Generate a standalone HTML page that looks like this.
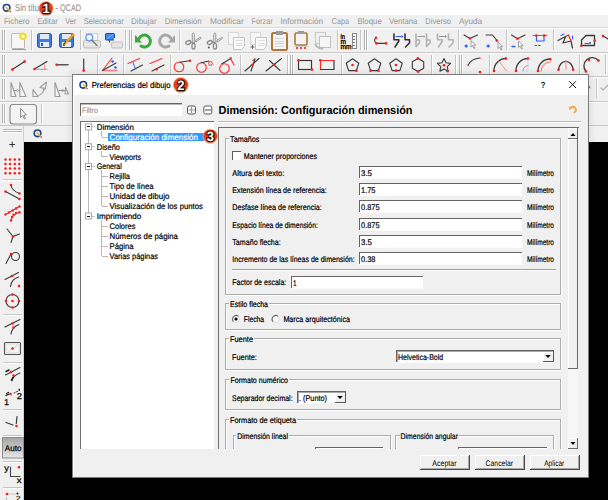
<!DOCTYPE html>
<html><head><meta charset="utf-8"><style>
html,body{margin:0;padding:0;background:#f0f0f0;}
svg{display:block;}
</style></head><body>
<svg width="608" height="500" viewBox="0 0 608 500" font-family="'Liberation Sans', sans-serif" shape-rendering="crispEdges" text-rendering="geometricPrecision">
<rect x="0" y="0" width="608" height="500" fill="#f0f0f0"/>
<rect x="0" y="0" width="608" height="15" fill="#ffffff"/>
<rect x="0" y="15" width="608" height="12" fill="#f0f0f0"/>
<rect x="0" y="27" width="608" height="1" fill="#d9d9d9"/>
<rect x="0" y="28" width="608" height="1" fill="#ffffff"/>
<text x="3.9" y="24" font-size="8.5" fill="#9a9a9a" textLength="25.6" lengthAdjust="spacingAndGlyphs" stroke="#9a9a9a" stroke-width="0.05">Fichero</text>
<text x="37.4" y="24" font-size="8.5" fill="#9a9a9a" textLength="20.5" lengthAdjust="spacingAndGlyphs" stroke="#9a9a9a" stroke-width="0.05">Editar</text>
<text x="65.3" y="24" font-size="8.5" fill="#9a9a9a" textLength="11.0" lengthAdjust="spacingAndGlyphs" stroke="#9a9a9a" stroke-width="0.05">Ver</text>
<text x="83.7" y="24" font-size="8.5" fill="#9a9a9a" textLength="40.0" lengthAdjust="spacingAndGlyphs" stroke="#9a9a9a" stroke-width="0.05">Seleccionar</text>
<text x="131" y="24" font-size="8.5" fill="#9a9a9a" textLength="25.6" lengthAdjust="spacingAndGlyphs" stroke="#9a9a9a" stroke-width="0.05">Dibujar</text>
<text x="164.7" y="24" font-size="8.5" fill="#9a9a9a" textLength="36.9" lengthAdjust="spacingAndGlyphs" stroke="#9a9a9a" stroke-width="0.05">Dimensión</text>
<text x="210" y="24" font-size="8.5" fill="#9a9a9a" textLength="33.7" lengthAdjust="spacingAndGlyphs" stroke="#9a9a9a" stroke-width="0.05">Modificar</text>
<text x="251.6" y="24" font-size="8.5" fill="#9a9a9a" textLength="21.0" lengthAdjust="spacingAndGlyphs" stroke="#9a9a9a" stroke-width="0.05">Forzar</text>
<text x="280.5" y="24" font-size="8.5" fill="#9a9a9a" textLength="42.5" lengthAdjust="spacingAndGlyphs" stroke="#9a9a9a" stroke-width="0.05">Información</text>
<text x="331.8" y="24" font-size="8.5" fill="#9a9a9a" textLength="17.2" lengthAdjust="spacingAndGlyphs" stroke="#9a9a9a" stroke-width="0.05">Capa</text>
<text x="357.4" y="24" font-size="8.5" fill="#9a9a9a" textLength="24.4" lengthAdjust="spacingAndGlyphs" stroke="#9a9a9a" stroke-width="0.05">Bloque</text>
<text x="389" y="24" font-size="8.5" fill="#9a9a9a" textLength="28.4" lengthAdjust="spacingAndGlyphs" stroke="#9a9a9a" stroke-width="0.05">Ventana</text>
<text x="425.3" y="24" font-size="8.5" fill="#9a9a9a" textLength="25.7" lengthAdjust="spacingAndGlyphs" stroke="#9a9a9a" stroke-width="0.05">Diverso</text>
<text x="459" y="24" font-size="8.5" fill="#9a9a9a" textLength="23.0" lengthAdjust="spacingAndGlyphs" stroke="#9a9a9a" stroke-width="0.05">Ayuda</text>
<text x="15" y="11" font-size="9.5" fill="#8f8f8f" textLength="24.0" lengthAdjust="spacingAndGlyphs" stroke="#8f8f8f" stroke-width="0.1">Sin títu</text>
<text x="55.5" y="11" font-size="9.5" fill="#8f8f8f" textLength="25.5" lengthAdjust="spacingAndGlyphs" stroke="#8f8f8f" stroke-width="0.1">- QCAD</text>
<rect x="0" y="52" width="608" height="1" fill="#c9c9c9"/>
<rect x="0" y="53" width="608" height="1" fill="#fafafa"/>
<rect x="0" y="76" width="608" height="1" fill="#c9c9c9"/>
<rect x="0" y="77" width="608" height="1" fill="#fafafa"/>
<rect x="0" y="101" width="608" height="1" fill="#c9c9c9"/>
<rect x="0" y="102" width="608" height="1" fill="#fafafa"/>
<rect x="0" y="125" width="608" height="1" fill="#c9c9c9"/>
<rect x="0" y="126" width="608" height="1" fill="#fafafa"/>
<rect x="0" y="126" width="23" height="374" fill="#f0f0f0"/>
<rect x="23" y="126" width="1" height="374" fill="#d0d0d0"/>
<rect x="24" y="126" width="584" height="16" fill="#f0f0f0"/>
<rect x="24" y="142" width="584" height="358" fill="#000000"/>
<circle cx="6.6" cy="7.8" r="3.3" stroke="#1f3f8f" stroke-width="1.6" fill="none" shape-rendering="auto"/>
<path d="M6.1 7.3L10.1 11.3" stroke="#f0b020" stroke-width="1.6" fill="none" shape-rendering="auto" stroke-linecap="round" stroke-linejoin="round"/>
<circle cx="10.399999999999999" cy="11.6" r="0.8" fill="#e05020" shape-rendering="auto"/>
<rect x="2" y="30" width="1" height="20" fill="#b4b4b4"/>
<rect x="3" y="30" width="1" height="20" fill="#fdfdfd"/>
<rect x="4" y="30" width="1" height="20" fill="#b4b4b4"/>
<rect x="5" y="30" width="1" height="20" fill="#fdfdfd"/>
<rect x="11" y="33" width="14" height="16" fill="#f7f7f7"/>
<rect x="11.5" y="33.5" width="13" height="15" fill="none" stroke="#b8b8b8" rx="1" shape-rendering="auto"/>
<rect x="12" y="49" width="14" height="1" fill="#9a9a9a"/>
<circle cx="23" cy="36.2" r="2.6" stroke="#f2dc30" stroke-width="2.2" fill="#fffbe0" shape-rendering="auto"/>
<rect x="31" y="30" width="1" height="20" fill="#c4c4c4"/>
<rect x="32" y="30" width="1" height="20" fill="#ffffff"/>
<rect x="37.5" y="33.5" width="14" height="14" rx="2" fill="#3b7ee6" stroke="#2058b8" shape-rendering="auto"/>
<rect x="40" y="34" width="9" height="5" fill="#dfe9f8"/>
<rect x="40" y="42" width="9" height="5" fill="#e8eef8"/>
<rect x="41" y="43" width="2" height="3" fill="#2a5fd0"/>
<rect x="59.5" y="33.5" width="14" height="14" rx="2" fill="#3b7ee6" stroke="#2058b8" shape-rendering="auto"/>
<rect x="62" y="34" width="9" height="5" fill="#dfe9f8"/>
<rect x="62" y="42" width="9" height="5" fill="#e8eef8"/>
<rect x="63" y="43" width="2" height="3" fill="#2a5fd0"/>
<path d="M64.5 44L73.5 34.5" stroke="#e8a020" stroke-width="2.4" fill="none" shape-rendering="auto" stroke-linecap="round" stroke-linejoin="round"/>
<path d="M64 44.5l1.5-3" stroke="#704010" stroke-width="1" fill="none" shape-rendering="auto" stroke-linecap="round" stroke-linejoin="round"/>
<rect x="80" y="30" width="1" height="20" fill="#c4c4c4"/>
<rect x="81" y="30" width="1" height="20" fill="#ffffff"/>
<rect x="86" y="33" width="12" height="8" fill="#f6f6f6"/>
<rect x="86.5" y="33.5" width="11" height="7" fill="none" stroke="#d0d0d0" shape-rendering="auto"/>
<rect x="83.5" y="40.5" width="17" height="7.5" rx="2" fill="#e4e4e4" stroke="#bcbcbc" shape-rendering="auto"/>
<rect x="85" y="44" width="14" height="1" fill="#f4f4f4"/>
<circle cx="89.3" cy="37.6" r="3.4" stroke="#6a98e6" stroke-width="1.3" fill="#eef4ff" shape-rendering="auto"/>
<path d="M91.8 40.2L97 45.5" stroke="#7a7a7a" stroke-width="1.6" fill="none" shape-rendering="auto" stroke-linecap="round" stroke-linejoin="round"/>
<rect x="105.5" y="33.5" width="9" height="6.5" rx="0.8" fill="#3d8af2" stroke="#1e44a8" shape-rendering="auto"/>
<path d="M107 38.5l6-4" stroke="#8fc0ff" stroke-width="0.8" fill="none" shape-rendering="auto" stroke-linecap="round" stroke-linejoin="round"/>
<path d="M109.5 40.5v1.5" stroke="#6a4020" stroke-width="1.2" fill="none" shape-rendering="auto" stroke-linecap="round" stroke-linejoin="round"/>
<rect x="114" y="38" width="6" height="5" fill="#f4f4f4"/>
<rect x="111.5" y="42" width="11" height="6" rx="1.5" fill="#e6e6e6" stroke="#bdbdbd" shape-rendering="auto"/>
<rect x="125" y="30" width="1" height="20" fill="#c4c4c4"/>
<rect x="126" y="30" width="1" height="20" fill="#ffffff"/>
<rect x="129" y="30" width="1" height="20" fill="#b4b4b4"/>
<rect x="130" y="30" width="1" height="20" fill="#fdfdfd"/>
<rect x="131" y="30" width="1" height="20" fill="#b4b4b4"/>
<rect x="132" y="30" width="1" height="20" fill="#fdfdfd"/>
<path d="M139 38.5 A6 6 0 1 1 141 46" stroke="#3aa83a" stroke-width="3" fill="none" shape-rendering="auto" stroke-linecap="round" stroke-linejoin="round"/>
<path d="M135 35l0 7.5h7z" fill="#3aa83a" shape-rendering="auto"/>
<path d="M171 38.5 A6 6 0 1 0 169 46" stroke="#a8a8a8" stroke-width="3" fill="none" shape-rendering="auto" stroke-linecap="round" stroke-linejoin="round"/>
<path d="M175 35l0 7.5h-7z" fill="#a8a8a8" shape-rendering="auto"/>
<rect x="179" y="30" width="1" height="20" fill="#c4c4c4"/>
<rect x="180" y="30" width="1" height="20" fill="#ffffff"/>
<path d="M193.3 33q1 0 1 1.5v8.5h-2v-8.5q0-1.5 1-1.5z" fill="#f4f4f4" stroke="#8a8a8a" stroke-width="0.9" shape-rendering="auto"/>
<path d="M195.3 40.5l5-3.2q1 0 0.5 1.2l-5 3.5z" fill="#f4f4f4" stroke="#8a8a8a" stroke-width="0.9" shape-rendering="auto"/>
<ellipse cx="188.3" cy="42.5" rx="2.6" ry="1.7" transform="rotate(-25 188.3 42.5)" fill="none" stroke="#8a8a8a" stroke-width="1.3" shape-rendering="auto"/>
<ellipse cx="193.5" cy="46.3" rx="1.6" ry="2.9" fill="none" stroke="#8a8a8a" stroke-width="1.3" shape-rendering="auto"/>
<path d="M190.3 42L192.8 42.5" stroke="#8a8a8a" stroke-width="1.1" fill="none" shape-rendering="auto" stroke-linecap="round" stroke-linejoin="round"/>
<path d="M214.8 33q1 0 1 1.5v8.5h-2v-8.5q0-1.5 1-1.5z" fill="#f4f4f4" stroke="#8a8a8a" stroke-width="0.9" shape-rendering="auto"/>
<path d="M216.8 40.5l5-3.2q1 0 0.5 1.2l-5 3.5z" fill="#f4f4f4" stroke="#8a8a8a" stroke-width="0.9" shape-rendering="auto"/>
<ellipse cx="209.8" cy="42.5" rx="2.6" ry="1.7" transform="rotate(-25 209.8 42.5)" fill="none" stroke="#8a8a8a" stroke-width="1.3" shape-rendering="auto"/>
<ellipse cx="215.0" cy="46.3" rx="1.6" ry="2.9" fill="none" stroke="#8a8a8a" stroke-width="1.3" shape-rendering="auto"/>
<path d="M211.8 42L214.3 42.5" stroke="#8a8a8a" stroke-width="1.1" fill="none" shape-rendering="auto" stroke-linecap="round" stroke-linejoin="round"/>
<circle cx="208.8" cy="47.5" r="1" fill="#555" shape-rendering="auto"/>
<rect x="228.5" y="32.5" width="10" height="12" fill="#f6f6f6" stroke="#d8d8d8" shape-rendering="auto"/>
<path d="M233.5 37.5h11v9l-3 3h-8z" fill="#fafafa" stroke="#c4c4c4" shape-rendering="auto"/>
<rect x="236" y="40.0" width="7" height="1" fill="#dedede"/>
<rect x="236" y="42.5" width="7" height="1" fill="#dedede"/>
<rect x="236" y="45.0" width="7" height="1" fill="#dedede"/>
<rect x="250.5" y="32.5" width="10" height="12" fill="#f6f6f6" stroke="#d8d8d8" shape-rendering="auto"/>
<path d="M255.5 37.5h11v9l-3 3h-8z" fill="#fafafa" stroke="#c4c4c4" shape-rendering="auto"/>
<rect x="258" y="40.0" width="7" height="1" fill="#dedede"/>
<rect x="258" y="42.5" width="7" height="1" fill="#dedede"/>
<rect x="258" y="45.0" width="7" height="1" fill="#dedede"/>
<path d="M251 47h3M252.5 45.5v3" stroke="#555" stroke-width="0.9" fill="none" shape-rendering="auto" stroke-linecap="round" stroke-linejoin="round"/>
<rect x="272" y="33" width="15" height="17" rx="1.5" fill="#f4f4f4" stroke="#b07838" stroke-width="2" shape-rendering="auto"/>
<rect x="276" y="31" width="7" height="4" fill="#9a9a9a"/>
<rect x="275" y="38.0" width="9" height="1" fill="#d6d6d6"/>
<rect x="275" y="40.5" width="9" height="1" fill="#d6d6d6"/>
<rect x="275" y="43.0" width="9" height="1" fill="#d6d6d6"/>
<rect x="275" y="45.5" width="9" height="1" fill="#d6d6d6"/>
<rect x="295" y="33" width="12" height="12" rx="1.5" fill="#f4f4f4" stroke="#b07838" stroke-width="1.6" shape-rendering="auto"/>
<rect x="298" y="31" width="6" height="3" fill="#9a9a9a"/>
<circle cx="297" cy="48" r="1.1" fill="#ff1a1a" shape-rendering="auto"/>
<circle cx="301" cy="48" r="1.1" fill="#ff1a1a" shape-rendering="auto"/>
<circle cx="305" cy="48" r="1.1" fill="#ff1a1a" shape-rendering="auto"/>
<rect x="294" y="46" width="15" height="1" fill="#d0d0d0"/>
<rect x="315.5" y="32.5" width="10" height="11" fill="#f0f0f0" stroke="#cacaca" shape-rendering="auto"/>
<rect x="319.5" y="36.5" width="11" height="11" fill="#f6f6f6" stroke="#c0c0c0" shape-rendering="auto"/>
<path d="M315.5 44.5q2 4 7 4" stroke="#b8b8b8" stroke-width="1.8" fill="none" shape-rendering="auto" stroke-linecap="round" stroke-linejoin="round"/>
<rect x="337" y="30" width="1" height="20" fill="#c4c4c4"/>
<rect x="338" y="30" width="1" height="20" fill="#ffffff"/>
<text x="340.5" y="38.5" font-size="7" fill="#000" textLength="4.5" lengthAdjust="spacingAndGlyphs" stroke="#000" stroke-width="0.35">in</text>
<text x="340.5" y="43.8" font-size="7" fill="#000" textLength="5.5" lengthAdjust="spacingAndGlyphs" stroke="#000" stroke-width="0.35">m</text>
<text x="340.5" y="49" font-size="7" fill="#000" textLength="11.0" lengthAdjust="spacingAndGlyphs" stroke="#000" stroke-width="0.35">mm</text>
<rect x="352.5" y="33.5" width="4" height="15" fill="#f8f8f8" stroke="#888" shape-rendering="auto"/>
<rect x="353" y="36" width="2" height="1" fill="#777"/>
<rect x="353" y="39" width="2" height="1" fill="#777"/>
<rect x="353" y="42" width="2" height="1" fill="#777"/>
<rect x="353" y="45" width="2" height="1" fill="#777"/>
<rect x="360" y="30" width="1" height="20" fill="#c4c4c4"/>
<rect x="361" y="30" width="1" height="20" fill="#ffffff"/>
<rect x="364" y="30" width="1" height="20" fill="#b4b4b4"/>
<rect x="365" y="30" width="1" height="20" fill="#fdfdfd"/>
<rect x="366" y="30" width="1" height="20" fill="#b4b4b4"/>
<rect x="367" y="30" width="1" height="20" fill="#fdfdfd"/>
<path d="M376 37.8 Q373 40.5 376.4 43.4 L386 43.4" stroke="#3a3a3a" stroke-width="1.1" fill="none" shape-rendering="auto" stroke-linecap="round" stroke-linejoin="round"/>
<circle cx="376" cy="37.8" r="1.3" fill="#ff1a1a" shape-rendering="auto"/>
<circle cx="376.4" cy="43.4" r="1.3" fill="#ff1a1a" shape-rendering="auto"/>
<circle cx="386" cy="43.4" r="1.3" fill="#ff1a1a" shape-rendering="auto"/>
<path d="M394 34V39.8H398.8V41L395 47" stroke="#333" stroke-width="1.6" fill="none" shape-rendering="auto" stroke-linecap="round" stroke-linejoin="round"/>
<path d="M405 34V39.8H409.5V43L405.5 47" stroke="#333" stroke-width="1.6" fill="none" shape-rendering="auto" stroke-linecap="round" stroke-linejoin="round"/>
<path d="M396 36.5h5" stroke="#3355ee" stroke-width="1" fill="none" shape-rendering="auto" stroke-linecap="round" stroke-linejoin="round"/>
<path d="M401.5 35l2 1.5l-2 1.5z" fill="#3355ee" shape-rendering="auto"/>
<path d="M416 34V46.5L419.5 43V40H416" stroke="#b0b0b0" stroke-width="1.5" fill="none" shape-rendering="auto" stroke-linecap="round" stroke-linejoin="round"/>
<path d="M426.5 34V46.5L430.0 43V40H426.5" stroke="#b0b0b0" stroke-width="1.5" fill="none" shape-rendering="auto" stroke-linecap="round" stroke-linejoin="round"/>
<path d="M418 36.5h5" stroke="#909090" stroke-width="0.9" fill="none" shape-rendering="auto" stroke-linecap="round" stroke-linejoin="round"/>
<path d="M423.5 35.2l1.6 1.3l-1.6 1.3z" fill="#909090" shape-rendering="auto"/>
<path d="M437.5 34V39.8H442.3V41L438.5 47" stroke="#b4b4b4" stroke-width="1.6" fill="none" shape-rendering="auto" stroke-linecap="round" stroke-linejoin="round"/>
<path d="M448.5 34V39.8H453.0V43L449.0 47" stroke="#b4b4b4" stroke-width="1.6" fill="none" shape-rendering="auto" stroke-linecap="round" stroke-linejoin="round"/>
<path d="M439.5 36.5h5" stroke="#909090" stroke-width="1" fill="none" shape-rendering="auto" stroke-linecap="round" stroke-linejoin="round"/>
<path d="M445.0 35l2 1.5l-2 1.5z" fill="#909090" shape-rendering="auto"/>
<rect x="458" y="30" width="1" height="20" fill="#c4c4c4"/>
<rect x="459" y="30" width="1" height="20" fill="#ffffff"/>
<path d="M464 35L470 38.5L477.5 35" stroke="#3a3a3a" stroke-width="1.1" fill="none" shape-rendering="auto" stroke-linecap="round" stroke-linejoin="round"/>
<circle cx="470" cy="38.5" r="1.3" fill="#ff1a1a" shape-rendering="auto"/>
<path d="M465 46h2.4M466.2 44.8v2.4" stroke="#2f5fff" stroke-width="1.3" fill="none" shape-rendering="auto" stroke-linecap="round" stroke-linejoin="round"/>
<path d="M471 40.5v6.5l1.5-1.5l1.5 3l1-0.5l-1.5-3h2.2z" fill="#f8f8f8" stroke="#909090" stroke-width="0.8" shape-rendering="auto"/>
<path d="M486 35H492.5L497 40.5" stroke="#3a3a3a" stroke-width="1.1" fill="none" shape-rendering="auto" stroke-linecap="round" stroke-linejoin="round"/>
<circle cx="496.8" cy="40.6" r="1.3" fill="#ff1a1a" shape-rendering="auto"/>
<path d="M487 46h2.4M488.2 44.8v2.4" stroke="#2f5fff" stroke-width="1.3" fill="none" shape-rendering="auto" stroke-linecap="round" stroke-linejoin="round"/>
<path d="M498 42v6.5l1.5-1.5l1.5 3l1-0.5l-1.5-3h2.2z" fill="#f8f8f8" stroke="#909090" stroke-width="0.8" shape-rendering="auto"/>
<rect x="506" y="30" width="1" height="20" fill="#c4c4c4"/>
<rect x="507" y="30" width="1" height="20" fill="#ffffff"/>
<path d="M511.5 35L517.5 38.7L525 35" stroke="#3a3a3a" stroke-width="1.1" fill="none" shape-rendering="auto" stroke-linecap="round" stroke-linejoin="round"/>
<circle cx="517.5" cy="38.7" r="1.3" fill="#ff1a1a" shape-rendering="auto"/>
<path d="M512 46.5h3" stroke="#2f5fff" stroke-width="1.3" fill="none" shape-rendering="auto" stroke-linecap="round" stroke-linejoin="round"/>
<path d="M518.5 41v6.5l1.5-1.5l1.5 3l1-0.5l-1.5-3h2.2z" fill="#f8f8f8" stroke="#909090" stroke-width="0.8" shape-rendering="auto"/>
<path d="M533 35.5h14" stroke="#777" stroke-width="1" fill="none" shape-rendering="auto" stroke-linecap="round" stroke-linejoin="round"/>
<path d="M536.5 35.5v5.5h7.5v-5.5" stroke="#2f5fff" stroke-width="1.2" fill="none" shape-rendering="auto" stroke-linecap="round" stroke-linejoin="round"/>
<circle cx="536.3" cy="35.5" r="1.3" fill="#ff1a1a" shape-rendering="auto"/>
<circle cx="544.2" cy="35.5" r="1.3" fill="#ff1a1a" shape-rendering="auto"/>
<path d="M535 45.5h1.8M538.5 45.5h1.8" stroke="#2f5fff" stroke-width="1.1" fill="none" shape-rendering="auto" stroke-linecap="round" stroke-linejoin="round"/>
<rect x="553" y="30" width="1" height="20" fill="#c4c4c4"/>
<rect x="554" y="30" width="1" height="20" fill="#ffffff"/>
<path d="M558 40.5L565.5 36.5M563 43L571 41L572.5 48M563 43L565.5 37" stroke="#3a3a3a" stroke-width="1.2" fill="none" shape-rendering="auto" stroke-linecap="round" stroke-linejoin="round"/>
<path d="M565.5 36.5L568.5 35L571 41" stroke="#e02020" stroke-width="1.1" fill="none" shape-rendering="auto" stroke-linecap="round" stroke-linejoin="round"/>
<path d="M561 35.5l3-1.5" stroke="#2f5fff" stroke-width="1.1" fill="none" shape-rendering="auto" stroke-linecap="round" stroke-linejoin="round"/>
<path d="M572.5 39v-3" stroke="#2f5fff" stroke-width="1.1" fill="none" shape-rendering="auto" stroke-linecap="round" stroke-linejoin="round"/>
<path d="M581.5 40L586 35.5H594.5V45.5H581.5Z" stroke="#3a3a3a" stroke-width="1.3" fill="none" shape-rendering="auto" stroke-linecap="round" stroke-linejoin="round"/>
<circle cx="581.3" cy="45.8" r="1.3" fill="#ff1a1a" shape-rendering="auto"/>
<circle cx="594.7" cy="40.7" r="1.3" fill="#ff1a1a" shape-rendering="auto"/>
<path d="M585 43.5h4" stroke="#2f5fff" stroke-width="1" fill="none" shape-rendering="auto" stroke-linecap="round" stroke-linejoin="round"/>
<circle cx="590" cy="43" r="1" fill="#2f5fff" shape-rendering="auto"/>
<path d="M603 36L608 39" stroke="#3a3a3a" stroke-width="1.1" fill="none" shape-rendering="auto" stroke-linecap="round" stroke-linejoin="round"/>
<circle cx="603" cy="36" r="1.3" fill="#ff1a1a" shape-rendering="auto"/>
<rect x="2" y="55" width="1" height="19" fill="#b4b4b4"/>
<rect x="3" y="55" width="1" height="19" fill="#fdfdfd"/>
<rect x="4" y="55" width="1" height="19" fill="#b4b4b4"/>
<rect x="5" y="55" width="1" height="19" fill="#fdfdfd"/>
<path d="M12.3 69.6L24.6 61.4" stroke="#3a3a3a" stroke-width="1.2" fill="none" shape-rendering="auto" stroke-linecap="round" stroke-linejoin="round"/>
<circle cx="12.3" cy="69.6" r="1.3" fill="#ff1a1a" shape-rendering="auto"/>
<circle cx="24.6" cy="61.4" r="1.3" fill="#ff1a1a" shape-rendering="auto"/>
<path d="M36 69.3H47" stroke="#8fb0ff" stroke-width="1.3" fill="none" shape-rendering="auto" stroke-linecap="round" stroke-linejoin="round"/>
<path d="M34.5 69L47 61.5" stroke="#3a3a3a" stroke-width="1.2" fill="none" shape-rendering="auto" stroke-linecap="round" stroke-linejoin="round"/>
<path d="M44 64.5q1.5 2 0.7 4.5" stroke="#ff6060" stroke-width="0.9" fill="none" shape-rendering="auto" stroke-linecap="round" stroke-linejoin="round"/>
<circle cx="34.5" cy="69" r="1.3" fill="#ff1a1a" shape-rendering="auto"/>
<path d="M57 64.8H68" stroke="#555" stroke-width="1.6" fill="none" shape-rendering="auto" stroke-linecap="round" stroke-linejoin="round"/>
<circle cx="56.6" cy="64.8" r="1.3" fill="#ff1a1a" shape-rendering="auto"/>
<path d="M83.7 59V70" stroke="#3a3a3a" stroke-width="1.2" fill="none" shape-rendering="auto" stroke-linecap="round" stroke-linejoin="round"/>
<circle cx="83.7" cy="70.6" r="1.3" fill="#ff1a1a" shape-rendering="auto"/>
<rect x="97" y="55" width="1" height="19" fill="#c4c4c4"/>
<rect x="98" y="55" width="1" height="19" fill="#ffffff"/>
<path d="M102.5 70.5H117" stroke="#ff8080" stroke-width="1.3" fill="none" shape-rendering="auto" stroke-linecap="round" stroke-linejoin="round"/>
<path d="M102.5 70.5L112 58" stroke="#ff3030" stroke-width="1.1" fill="none" shape-rendering="auto" stroke-linecap="round" stroke-linejoin="round"/>
<path d="M102.5 70.5L116 63" stroke="#3a3a3a" stroke-width="1.1" fill="none" shape-rendering="auto" stroke-linecap="round" stroke-linejoin="round"/>
<circle cx="112.5" cy="61.5" r="1.3" fill="#2f5fff" shape-rendering="auto"/>
<circle cx="115.5" cy="67.5" r="1.3" fill="#2f5fff" shape-rendering="auto"/>
<rect x="123" y="55" width="1" height="19" fill="#c4c4c4"/>
<rect x="124" y="55" width="1" height="19" fill="#ffffff"/>
<path d="M128 63.5L139.5 58.5" stroke="#ff3030" stroke-width="1.1" fill="none" shape-rendering="auto" stroke-linecap="round" stroke-linejoin="round"/>
<path d="M131 71L142.5 65" stroke="#3a3a3a" stroke-width="1.1" fill="none" shape-rendering="auto" stroke-linecap="round" stroke-linejoin="round"/>
<path d="M133 62.5L135.5 69" stroke="#2f5fff" stroke-width="1" fill="none" shape-rendering="auto" stroke-linecap="round" stroke-linejoin="round"/>
<path d="M150 63.5L162 58.5" stroke="#ff3030" stroke-width="1.1" fill="none" shape-rendering="auto" stroke-linecap="round" stroke-linejoin="round"/>
<path d="M152 71L164 65" stroke="#3a3a3a" stroke-width="1.1" fill="none" shape-rendering="auto" stroke-linecap="round" stroke-linejoin="round"/>
<circle cx="156.5" cy="69.2" r="1.3" fill="#ff1a1a" shape-rendering="auto"/>
<rect x="170" y="55" width="1" height="19" fill="#c4c4c4"/>
<rect x="171" y="55" width="1" height="19" fill="#ffffff"/>
<circle cx="179" cy="67" r="4.8" stroke="#ff2a2a" stroke-width="1.1" fill="none" shape-rendering="auto"/>
<path d="M179.5 62.2L189.5 60.7" stroke="#3a3a3a" stroke-width="1.1" fill="none" shape-rendering="auto" stroke-linecap="round" stroke-linejoin="round"/>
<circle cx="190" cy="60.7" r="1.3" fill="#ff1a1a" shape-rendering="auto"/>
<circle cx="201.5" cy="67.5" r="4.8" stroke="#ff2a2a" stroke-width="1.1" fill="none" shape-rendering="auto"/>
<circle cx="210.5" cy="63.5" r="1.9" stroke="#ff2a2a" stroke-width="1" fill="none" shape-rendering="auto"/>
<path d="M201 62.7L209 61" stroke="#3a3a3a" stroke-width="1.1" fill="none" shape-rendering="auto" stroke-linecap="round" stroke-linejoin="round"/>
<circle cx="224.5" cy="68.5" r="4.8" stroke="#ff2a2a" stroke-width="1.1" fill="none" shape-rendering="auto"/>
<path d="M222 63.8L231.5 58" stroke="#3a3a3a" stroke-width="1.1" fill="none" shape-rendering="auto" stroke-linecap="round" stroke-linejoin="round"/>
<path d="M230 57.5L234 65" stroke="#ff2a2a" stroke-width="1.1" fill="none" shape-rendering="auto" stroke-linecap="round" stroke-linejoin="round"/>
<rect x="240" y="55" width="1" height="19" fill="#c4c4c4"/>
<rect x="241" y="55" width="1" height="19" fill="#ffffff"/>
<path d="M245 71L259 58.5M251 71L255 59" stroke="#3a3a3a" stroke-width="1.1" fill="none" shape-rendering="auto" stroke-linecap="round" stroke-linejoin="round"/>
<path d="M253 60.5L255 59" stroke="#ff3030" stroke-width="1.2" fill="none" shape-rendering="auto" stroke-linecap="round" stroke-linejoin="round"/>
<circle cx="252.2" cy="65" r="1.3" fill="#ff1a1a" shape-rendering="auto"/>
<path d="M266 71L281.5 58.5M269.5 60.5L280 70.5" stroke="#3a3a3a" stroke-width="1.1" fill="none" shape-rendering="auto" stroke-linecap="round" stroke-linejoin="round"/>
<circle cx="274.2" cy="64.9" r="1.3" fill="#ff1a1a" shape-rendering="auto"/>
<rect x="287" y="55" width="1" height="19" fill="#c4c4c4"/>
<rect x="288" y="55" width="1" height="19" fill="#ffffff"/>
<rect x="290" y="55" width="1" height="19" fill="#b4b4b4"/>
<rect x="291" y="55" width="1" height="19" fill="#fdfdfd"/>
<rect x="292" y="55" width="1" height="19" fill="#b4b4b4"/>
<rect x="293" y="55" width="1" height="19" fill="#fdfdfd"/>
<rect x="298.5" y="60.5" width="13" height="9" fill="none" stroke="#3a3a3a" stroke-width="1.2" shape-rendering="auto"/>
<circle cx="298.5" cy="60.2" r="1.3" fill="#ff1a1a" shape-rendering="auto"/>
<circle cx="312" cy="69.6" r="1.3" fill="#ff1a1a" shape-rendering="auto"/>
<path d="M320.5 69.5V60.5H334" stroke="#ff2a2a" stroke-width="1.2" fill="none" shape-rendering="auto" stroke-linecap="round" stroke-linejoin="round"/>
<path d="M334 60.5V69.5H320.5" stroke="#3a3a3a" stroke-width="1.2" fill="none" shape-rendering="auto" stroke-linecap="round" stroke-linejoin="round"/>
<circle cx="320.3" cy="60.2" r="1.3" fill="#ff1a1a" shape-rendering="auto"/>
<rect x="341" y="55" width="1" height="19" fill="#c4c4c4"/>
<rect x="342" y="55" width="1" height="19" fill="#ffffff"/>
<path d="M352.50 58.70L358.78 63.26L356.38 70.64L348.62 70.64L346.22 63.26Z" stroke="#3a3a3a" stroke-width="1.1" fill="none" shape-rendering="auto" stroke-linecap="round" stroke-linejoin="round"/>
<circle cx="352.5" cy="65" r="1.3" fill="#ff1a1a" shape-rendering="auto"/>
<circle cx="356.3793826651303" cy="70.63951216287465" r="1.3" fill="#ff1a1a" shape-rendering="auto"/>
<path d="M374.50 58.70L380.78 63.26L378.38 70.64L370.62 70.64L368.22 63.26Z" stroke="#3a3a3a" stroke-width="1.1" fill="none" shape-rendering="auto" stroke-linecap="round" stroke-linejoin="round"/>
<circle cx="378.3793826651303" cy="70.63951216287465" r="1.3" fill="#ff1a1a" shape-rendering="auto"/>
<circle cx="370.6206173348697" cy="70.63951216287465" r="1.3" fill="#ff1a1a" shape-rendering="auto"/>
<path d="M396.00 58.70L402.28 63.26L399.88 70.64L392.12 70.64L389.72 63.26Z" stroke="#3a3a3a" stroke-width="1.1" fill="none" shape-rendering="auto" stroke-linecap="round" stroke-linejoin="round"/>
<circle cx="396" cy="65" r="1.3" fill="#ff1a1a" shape-rendering="auto"/>
<circle cx="396" cy="70.6" r="1.3" fill="#ff1a1a" shape-rendering="auto"/>
<path d="M418.00 58.40L423.72 61.70L423.72 68.30L418.00 71.60L412.28 68.30L412.28 61.70Z" stroke="#3a3a3a" stroke-width="1.1" fill="none" shape-rendering="auto" stroke-linecap="round" stroke-linejoin="round"/>
<circle cx="418" cy="58.4" r="1.3" fill="#ff1a1a" shape-rendering="auto"/>
<circle cx="418" cy="71.6" r="1.3" fill="#ff1a1a" shape-rendering="auto"/>
<rect x="431" y="55" width="1" height="19" fill="#c4c4c4"/>
<rect x="432" y="55" width="1" height="19" fill="#ffffff"/>
<path d="M444.00 58.50L446.00 62.75L450.66 63.34L447.23 66.55L448.11 71.16L444.00 68.90L439.89 71.16L440.77 66.55L437.34 63.34L442.00 62.75Z" stroke="#3a3a3a" stroke-width="1.1" fill="none" shape-rendering="auto" stroke-linecap="round" stroke-linejoin="round"/>
<circle cx="444" cy="65.3" r="1.3" fill="#ff1a1a" shape-rendering="auto"/>
<circle cx="447.8" cy="71.3" r="1.3" fill="#ff1a1a" shape-rendering="auto"/>
<rect x="455" y="55" width="1" height="19" fill="#c4c4c4"/>
<rect x="456" y="55" width="1" height="19" fill="#ffffff"/>
<rect x="459" y="55" width="1" height="19" fill="#b4b4b4"/>
<rect x="460" y="55" width="1" height="19" fill="#fdfdfd"/>
<rect x="461" y="55" width="1" height="19" fill="#b4b4b4"/>
<rect x="462" y="55" width="1" height="19" fill="#fdfdfd"/>
<path d="M468 65.5Q471 58.5 480 58" stroke="#3a3a3a" stroke-width="1.2" fill="none" shape-rendering="auto" stroke-linecap="round" stroke-linejoin="round"/>
<path d="M467 64.5l2 2M479 57l2 2" stroke="#ff7070" stroke-width="0.9" fill="none" shape-rendering="auto" stroke-linecap="round" stroke-linejoin="round"/>
<circle cx="480" cy="72" r="1.3" fill="#ff1a1a" shape-rendering="auto"/>
<rect x="489" y="55" width="1" height="19" fill="#c4c4c4"/>
<rect x="490" y="55" width="1" height="19" fill="#ffffff"/>
<path d="M494 71A12 12 0 0 1 506 58.5" stroke="#3a3a3a" stroke-width="1.3" fill="none" shape-rendering="auto" stroke-linecap="round" stroke-linejoin="round"/>
<path d="M498 60L506.5 71" stroke="#ff8080" stroke-width="0.9" fill="none" shape-rendering="auto" stroke-linecap="round" stroke-linejoin="round"/>
<circle cx="494" cy="71" r="1.3" fill="#ff1a1a" shape-rendering="auto"/>
<circle cx="506" cy="58.5" r="1.3" fill="#ff1a1a" shape-rendering="auto"/>
<path d="M516 71A12 12 0 0 1 528 58.5" stroke="#3a3a3a" stroke-width="1.3" fill="none" shape-rendering="auto" stroke-linecap="round" stroke-linejoin="round"/>
<path d="M523 70.5A5 5 0 0 1 528 65.5" stroke="#ff7070" stroke-width="0.9" fill="none" shape-rendering="auto" stroke-linecap="round" stroke-linejoin="round"/>
<path d="M528 59V71H522" stroke="#c0d0f0" stroke-width="0.7" fill="none" shape-rendering="auto" stroke-linecap="round" stroke-linejoin="round"/>
<circle cx="516" cy="71" r="1.3" fill="#ff1a1a" shape-rendering="auto"/>
<circle cx="528" cy="58.5" r="1.3" fill="#ff1a1a" shape-rendering="auto"/>
<path d="M538 71A12 12 0 0 1 550 59" stroke="#3a3a3a" stroke-width="1.3" fill="none" shape-rendering="auto" stroke-linecap="round" stroke-linejoin="round"/>
<path d="M541 71A9 9 0 0 1 550 62" stroke="#ff6a6a" stroke-width="1" fill="none" shape-rendering="auto" stroke-linecap="round" stroke-linejoin="round"/>
<circle cx="538" cy="71" r="1.3" fill="#ff1a1a" shape-rendering="auto"/>
<circle cx="550.3" cy="59.3" r="1.3" fill="#ff1a1a" shape-rendering="auto"/>
<path d="M558.5 69.8A7.4 9.6 0 0 1 573.2 69.8" stroke="#3a3a3a" stroke-width="1.3" fill="none" shape-rendering="auto" stroke-linecap="round" stroke-linejoin="round"/>
<path d="M566 60.5V69" stroke="#ff9090" stroke-width="1.2" fill="none" shape-rendering="auto" stroke-linecap="round" stroke-linejoin="round"/>
<circle cx="558.5" cy="69.8" r="1.3" fill="#ff1a1a" shape-rendering="auto"/>
<circle cx="573.2" cy="69.8" r="1.3" fill="#ff1a1a" shape-rendering="auto"/>
<rect x="579" y="55" width="1" height="19" fill="#c4c4c4"/>
<rect x="580" y="55" width="1" height="19" fill="#ffffff"/>
<path d="M586 71.5A7 7 0 0 1 598.5 60.5" stroke="#3a3a3a" stroke-width="1.3" fill="none" shape-rendering="auto" stroke-linecap="round" stroke-linejoin="round"/>
<circle cx="589" cy="60" r="1.3" fill="#ff1a1a" shape-rendering="auto"/>
<circle cx="598.5" cy="60.5" r="1.3" fill="#ff1a1a" shape-rendering="auto"/>
<circle cx="586" cy="71.5" r="1.3" fill="#ff1a1a" shape-rendering="auto"/>
<rect x="605" y="55" width="1" height="19" fill="#c4c4c4"/>
<rect x="606" y="55" width="1" height="19" fill="#ffffff"/>
<rect x="2" y="79" width="1" height="20" fill="#b4b4b4"/>
<rect x="3" y="79" width="1" height="20" fill="#fdfdfd"/>
<rect x="4" y="79" width="1" height="20" fill="#b4b4b4"/>
<rect x="5" y="79" width="1" height="20" fill="#fdfdfd"/>
<path d="M11 82.5L16 96.5H11Z" fill="#f4f4f4" stroke="#9a9a9a" stroke-width="1.1" stroke-linejoin="round" shape-rendering="auto"/>
<path d="M19.8 82.5L26 96.5H19.8Z" fill="#f4f4f4" stroke="#9a9a9a" stroke-width="1.1" stroke-linejoin="round" shape-rendering="auto"/>
<path d="M14.5 90.5h5" stroke="#9a9a9a" stroke-width="1" fill="none" shape-rendering="auto" stroke-linecap="round" stroke-linejoin="round"/>
<circle cx="17.5" cy="90.5" r="1.1" fill="#f8f8f8" shape-rendering="auto"/>
<circle cx="17.5" cy="90.5" r="1.1" stroke="#999" stroke-width="0.8" fill="none" shape-rendering="auto"/>
<path d="M33 89.5L38 96.5H33Z" fill="#f4f4f4" stroke="#9a9a9a" stroke-width="1.1" stroke-linejoin="round" shape-rendering="auto"/>
<path d="M46.5 82L40 87.5L45.5 88.5Z" fill="#f4f4f4" stroke="#9a9a9a" stroke-width="1.1" stroke-linejoin="round" shape-rendering="auto"/>
<path d="M38.5 95.5q5 -2 5.5 -6.5" stroke="#aaa" stroke-width="1.3" fill="none" shape-rendering="auto" stroke-linecap="round" stroke-linejoin="round"/>
<circle cx="44" cy="89" r="1.1" stroke="#999" stroke-width="0.8" fill="none" shape-rendering="auto"/>
<path d="M55 82.5L60 96.5H55Z" fill="#f4f4f4" stroke="#9a9a9a" stroke-width="1.1" stroke-linejoin="round" shape-rendering="auto"/>
<path d="M65.5 87.5L68.5 94H65Z" fill="#f4f4f4" stroke="#9a9a9a" stroke-width="1.1" stroke-linejoin="round" shape-rendering="auto"/>
<path d="M58.5 90.5h6.5" stroke="#9a9a9a" stroke-width="1" fill="none" shape-rendering="auto" stroke-linecap="round" stroke-linejoin="round"/>
<circle cx="62.5" cy="90.5" r="1.1" stroke="#999" stroke-width="0.8" fill="none" shape-rendering="auto"/>
<rect x="596" y="79" width="1" height="20" fill="#c4c4c4"/>
<rect x="597" y="79" width="1" height="20" fill="#ffffff"/>
<path d="M601 88l2 2l5-5" stroke="#b8b8b8" stroke-width="1.5" fill="none" shape-rendering="auto" stroke-linecap="round" stroke-linejoin="round"/>
<path d="M589 86l1 2" stroke="#555" stroke-width="1" fill="none" shape-rendering="auto" stroke-linecap="round" stroke-linejoin="round"/>
<rect x="2" y="104" width="1" height="19" fill="#b4b4b4"/>
<rect x="3" y="104" width="1" height="19" fill="#fdfdfd"/>
<rect x="4" y="104" width="1" height="19" fill="#b4b4b4"/>
<rect x="5" y="104" width="1" height="19" fill="#fdfdfd"/>
<rect x="10" y="104.5" width="26.5" height="19.5" rx="3" fill="#f4f4f4" stroke="#8a8a8a" stroke-width="1.1" shape-rendering="auto"/>
<path d="M20.5 108.5v9l2-2l1.8 3.5l1.2-0.6l-1.8-3.4h2.8z" fill="#fafafa" stroke="#777" stroke-width="0.8" shape-rendering="auto"/>
<rect x="41" y="104" width="1" height="19" fill="#c4c4c4"/>
<rect x="42" y="104" width="1" height="19" fill="#ffffff"/>
<circle cx="37.5" cy="133.3" r="3.3" stroke="#1f3f8f" stroke-width="1.6" fill="none" shape-rendering="auto"/>
<path d="M37.0 132.8L41.0 136.8" stroke="#f0b020" stroke-width="1.6" fill="none" shape-rendering="auto" stroke-linecap="round" stroke-linejoin="round"/>
<circle cx="41.3" cy="137.10000000000002" r="0.8" fill="#e05020" shape-rendering="auto"/>
<rect x="3" y="129" width="19" height="1" fill="#b4b4b4"/>
<rect x="3" y="130" width="19" height="1" fill="#fdfdfd"/>
<rect x="3" y="131" width="19" height="1" fill="#b4b4b4"/>
<rect x="3" y="132" width="19" height="1" fill="#fdfdfd"/>
<path d="M12.2 142v5M9.7 144.5h5" stroke="#222" stroke-width="0.9" fill="none" shape-rendering="auto" stroke-linecap="round" stroke-linejoin="round"/>
<circle cx="5.5" cy="159.5" r="1.25" fill="#ff1a1a" shape-rendering="auto"/>
<circle cx="5.5" cy="164" r="1.25" fill="#ff1a1a" shape-rendering="auto"/>
<circle cx="5.5" cy="168.5" r="1.25" fill="#ff1a1a" shape-rendering="auto"/>
<circle cx="5.5" cy="173.2" r="1.25" fill="#ff1a1a" shape-rendering="auto"/>
<circle cx="10" cy="159.5" r="1.25" fill="#ff1a1a" shape-rendering="auto"/>
<circle cx="10" cy="164" r="1.25" fill="#ff1a1a" shape-rendering="auto"/>
<circle cx="10" cy="168.5" r="1.25" fill="#ff1a1a" shape-rendering="auto"/>
<circle cx="10" cy="173.2" r="1.25" fill="#ff1a1a" shape-rendering="auto"/>
<circle cx="14.8" cy="159.5" r="1.25" fill="#ff1a1a" shape-rendering="auto"/>
<circle cx="14.8" cy="164" r="1.25" fill="#ff1a1a" shape-rendering="auto"/>
<circle cx="14.8" cy="168.5" r="1.25" fill="#ff1a1a" shape-rendering="auto"/>
<circle cx="14.8" cy="173.2" r="1.25" fill="#ff1a1a" shape-rendering="auto"/>
<circle cx="19.3" cy="159.5" r="1.25" fill="#ff1a1a" shape-rendering="auto"/>
<circle cx="19.3" cy="164" r="1.25" fill="#ff1a1a" shape-rendering="auto"/>
<circle cx="19.3" cy="168.5" r="1.25" fill="#ff1a1a" shape-rendering="auto"/>
<circle cx="19.3" cy="173.2" r="1.25" fill="#ff1a1a" shape-rendering="auto"/>
<rect x="3" y="179" width="19" height="1" fill="#c4c4c4"/>
<rect x="3" y="180" width="19" height="1" fill="#ffffff"/>
<path d="M5.5 191.5L19.5 199" stroke="#3a3a3a" stroke-width="1.1" fill="none" shape-rendering="auto" stroke-linecap="round" stroke-linejoin="round"/>
<path d="M11 185Q12 191 19.5 193.5" stroke="#3a3a3a" stroke-width="1.1" fill="none" shape-rendering="auto" stroke-linecap="round" stroke-linejoin="round"/>
<circle cx="5.5" cy="191.5" r="1.3" fill="#ff1a1a" shape-rendering="auto"/>
<circle cx="19.5" cy="199" r="1.3" fill="#ff1a1a" shape-rendering="auto"/>
<circle cx="11" cy="185" r="1.3" fill="#ff1a1a" shape-rendering="auto"/>
<circle cx="19.5" cy="193.5" r="1.3" fill="#ff1a1a" shape-rendering="auto"/>
<path d="M5.5 214.5L19.5 206.5" stroke="#5a3a3a" stroke-width="1" fill="none" shape-rendering="auto" stroke-linecap="round" stroke-linejoin="round"/>
<path d="M11 220.5Q12.5 214 19.5 212.3" stroke="#5a3a3a" stroke-width="1" fill="none" shape-rendering="auto" stroke-linecap="round" stroke-linejoin="round"/>
<circle cx="5.5" cy="214.5" r="1.2" fill="#ff1a1a" shape-rendering="auto"/>
<circle cx="9" cy="212.5" r="1.2" fill="#ff1a1a" shape-rendering="auto"/>
<circle cx="12.5" cy="210.5" r="1.2" fill="#ff1a1a" shape-rendering="auto"/>
<circle cx="16" cy="208.5" r="1.2" fill="#ff1a1a" shape-rendering="auto"/>
<circle cx="19.5" cy="206.5" r="1.2" fill="#ff1a1a" shape-rendering="auto"/>
<circle cx="11" cy="220.5" r="1.2" fill="#ff1a1a" shape-rendering="auto"/>
<circle cx="12" cy="217" r="1.2" fill="#ff1a1a" shape-rendering="auto"/>
<circle cx="13.5" cy="214.8" r="1.2" fill="#ff1a1a" shape-rendering="auto"/>
<circle cx="16" cy="213" r="1.2" fill="#ff1a1a" shape-rendering="auto"/>
<circle cx="19.5" cy="212.3" r="1.2" fill="#ff1a1a" shape-rendering="auto"/>
<path d="M13 236.5L15 232.5L18 234z" fill="#ddd" shape-rendering="auto"/>
<path d="M7 229L13 236.5L19.5 234M13 236.5L11 242.5" stroke="#3a3a3a" stroke-width="1.1" fill="none" shape-rendering="auto" stroke-linecap="round" stroke-linejoin="round"/>
<circle cx="13" cy="236.5" r="1.3" fill="#ff1a1a" shape-rendering="auto"/>
<circle cx="15.5" cy="256.5" r="4" stroke="#3a3a3a" stroke-width="1.1" fill="none" shape-rendering="auto"/>
<path d="M6 263.5L11 254" stroke="#3a3a3a" stroke-width="1.1" fill="none" shape-rendering="auto" stroke-linecap="round" stroke-linejoin="round"/>
<circle cx="11" cy="254" r="1.3" fill="#ff1a1a" shape-rendering="auto"/>
<path d="M5 279.5L18.5 272.5" stroke="#3a3a3a" stroke-width="1.1" fill="none" shape-rendering="auto" stroke-linecap="round" stroke-linejoin="round"/>
<path d="M10.5 286.5Q11.5 279 18.5 277" stroke="#3a3a3a" stroke-width="1.1" fill="none" shape-rendering="auto" stroke-linecap="round" stroke-linejoin="round"/>
<circle cx="12" cy="276" r="1.3" fill="#ff1a1a" shape-rendering="auto"/>
<circle cx="19" cy="286" r="1.3" fill="#ff1a1a" shape-rendering="auto"/>
<circle cx="12.5" cy="301" r="6.5" stroke="#3a3a3a" stroke-width="1.1" fill="none" shape-rendering="auto"/>
<circle cx="12.5" cy="301" r="1.3" fill="#ff1a1a" shape-rendering="auto"/>
<circle cx="12.5" cy="294.5" r="1.3" fill="#ff1a1a" shape-rendering="auto"/>
<circle cx="12.5" cy="307.5" r="1.3" fill="#ff1a1a" shape-rendering="auto"/>
<circle cx="6" cy="301" r="1.3" fill="#ff1a1a" shape-rendering="auto"/>
<circle cx="19" cy="301" r="1.3" fill="#ff1a1a" shape-rendering="auto"/>
<rect x="3" y="314" width="19" height="1" fill="#c4c4c4"/>
<rect x="3" y="315" width="19" height="1" fill="#ffffff"/>
<path d="M5 327L20 319.5" stroke="#3a3a3a" stroke-width="1.1" fill="none" shape-rendering="auto" stroke-linecap="round" stroke-linejoin="round"/>
<path d="M11 334Q12 327 19 324.5" stroke="#3a3a3a" stroke-width="1.1" fill="none" shape-rendering="auto" stroke-linecap="round" stroke-linejoin="round"/>
<circle cx="12.5" cy="323.5" r="1.3" fill="#ff1a1a" shape-rendering="auto"/>
<circle cx="13.5" cy="327.5" r="1.3" fill="#ff1a1a" shape-rendering="auto"/>
<rect x="4.5" y="342.5" width="16" height="12" rx="1" fill="#f6f6f6" stroke="#555" stroke-width="1.1" shape-rendering="auto"/>
<rect x="6" y="344" width="13" height="9" fill="none" stroke="#cfcfcf" stroke-width="0.8" shape-rendering="auto"/>
<path d="M9 351.5L17 345.5" stroke="#c0c0c0" stroke-width="0.8" fill="none" shape-rendering="auto" stroke-linecap="round" stroke-linejoin="round"/>
<circle cx="12.5" cy="348.5" r="1.3" fill="#ff1a1a" shape-rendering="auto"/>
<rect x="3" y="362" width="19" height="1" fill="#c4c4c4"/>
<rect x="3" y="363" width="19" height="1" fill="#ffffff"/>
<path d="M5.5 375L20 367.5" stroke="#3a3a3a" stroke-width="1.1" fill="none" shape-rendering="auto" stroke-linecap="round" stroke-linejoin="round"/>
<path d="M12 381Q12.5 376 20 373" stroke="#3a3a3a" stroke-width="1.1" fill="none" shape-rendering="auto" stroke-linecap="round" stroke-linejoin="round"/>
<path d="M6 371.5l3-1.5" stroke="#222" stroke-width="1.6" fill="none" shape-rendering="auto" stroke-linecap="round" stroke-linejoin="round"/>
<path d="M11.5 380l2-3" stroke="#222" stroke-width="1.6" fill="none" shape-rendering="auto" stroke-linecap="round" stroke-linejoin="round"/>
<circle cx="11" cy="372" r="1.3" fill="#ff1a1a" shape-rendering="auto"/>
<circle cx="13.5" cy="375.5" r="1.3" fill="#ff1a1a" shape-rendering="auto"/>
<path d="M6 395.5l2.5-1.2M6.5 393.5l2-1" stroke="#222" stroke-width="1.3" fill="none" shape-rendering="auto" stroke-linecap="round" stroke-linejoin="round"/>
<circle cx="10.5" cy="394" r="1.3" fill="#ff1a1a" shape-rendering="auto"/>
<path d="M14 393l1.2-0.6M16.5 391.8l1.2-0.6" stroke="#333" stroke-width="1" fill="none" shape-rendering="auto" stroke-linecap="round" stroke-linejoin="round"/>
<text x="4.2" y="404.8" font-size="8.5" fill="#111" textLength="4.6" lengthAdjust="spacingAndGlyphs" stroke="#111" stroke-width="0.35">1</text>
<text x="16.8" y="399" font-size="8.5" fill="#111" textLength="5.2" lengthAdjust="spacingAndGlyphs" stroke="#111" stroke-width="0.35">2</text>
<path d="M19.2 389.2v1.2" stroke="#111" stroke-width="1.2" fill="none" shape-rendering="auto" stroke-linecap="round" stroke-linejoin="round"/>
<rect x="3" y="409" width="19" height="1" fill="#c4c4c4"/>
<rect x="3" y="410" width="19" height="1" fill="#ffffff"/>
<path d="M6 422.5L13 425M17 416.5L16.3 423.5" stroke="#3a3a3a" stroke-width="1.2" fill="none" shape-rendering="auto" stroke-linecap="round" stroke-linejoin="round"/>
<circle cx="16.5" cy="426" r="1.3" fill="#ff1a1a" shape-rendering="auto"/>
<rect x="3" y="435" width="19" height="1" fill="#c4c4c4"/>
<rect x="3" y="436" width="19" height="1" fill="#ffffff"/>
<defs><linearGradient id="ag" x1="0" y1="0" x2="0" y2="1"><stop offset="0" stop-color="#a4a4a4"/><stop offset="1" stop-color="#e8e8e8"/></linearGradient></defs>
<rect x="2.5" y="437.5" width="21" height="20.5" fill="url(#ag)" stroke="#8c8c8c" shape-rendering="auto"/>
<text x="4.8" y="451.2" font-size="8.3" fill="#111" textLength="16.7" lengthAdjust="spacingAndGlyphs" stroke="#111" stroke-width="0.3">Auto</text>
<rect x="3" y="461" width="19" height="1" fill="#c4c4c4"/>
<rect x="3" y="462" width="19" height="1" fill="#ffffff"/>
<text x="4.2" y="470.5" font-size="8.5" fill="#111" textLength="4.6" lengthAdjust="spacingAndGlyphs" stroke="#111" stroke-width="0.3">y</text>
<path d="M10.5 467V476.5H20" stroke="#444" stroke-width="1.1" fill="none" shape-rendering="auto" stroke-linecap="round" stroke-linejoin="round"/>
<text x="16.8" y="482.5" font-size="8" fill="#111" textLength="4.8" lengthAdjust="spacingAndGlyphs" stroke="#111" stroke-width="0.3">x</text>
<circle cx="19" cy="467.3" r="1.3" fill="#ff1a1a" shape-rendering="auto"/>
<rect x="3" y="487" width="19" height="1" fill="#c4c4c4"/>
<rect x="3" y="488" width="19" height="1" fill="#ffffff"/>
<path d="M7 494H17" stroke="#ccc" stroke-width="1.2" fill="none" shape-rendering="auto" stroke-linecap="round" stroke-linejoin="round"/>
<circle cx="7" cy="494" r="1.3" fill="#ff1a1a" shape-rendering="auto"/>
<circle cx="17.5" cy="493.5" r="0.9" fill="#111" shape-rendering="auto"/>
<text x="16" y="500.5" font-size="7.5" fill="#111" textLength="4.5" lengthAdjust="spacingAndGlyphs" stroke="#111" stroke-width="0.2">2</text>
<path d="M6.5 497v3" stroke="#ccc" stroke-width="1.2" fill="none" shape-rendering="auto" stroke-linecap="round" stroke-linejoin="round"/>
<rect x="71.5" y="73.5" width="518" height="405" fill="none" stroke="#000" stroke-opacity="0.045" rx="1"/>
<rect x="70.5" y="72.5" width="520" height="407" fill="none" stroke="#000" stroke-opacity="0.037" rx="2"/>
<rect x="69.5" y="71.5" width="522" height="409" fill="none" stroke="#000" stroke-opacity="0.030" rx="3"/>
<rect x="68.5" y="70.5" width="524" height="411" fill="none" stroke="#000" stroke-opacity="0.023" rx="4"/>
<rect x="67.5" y="69.5" width="526" height="413" fill="none" stroke="#000" stroke-opacity="0.015" rx="5"/>
<rect x="66.5" y="68.5" width="528" height="415" fill="none" stroke="#000" stroke-opacity="0.007" rx="6"/>
<rect x="72" y="74" width="517" height="404" fill="#f0f0f0"/>
<rect x="72" y="74" width="517" height="21" fill="#ffffff"/>
<rect x="72.5" y="74.5" width="516" height="403" fill="none" stroke="#7a7a7a"/>
<rect x="73" y="95" width="1" height="382" fill="#ffffff"/>
<text x="91.7" y="88.4" font-size="8.6" fill="#000" textLength="78.9" lengthAdjust="spacingAndGlyphs" stroke="#000" stroke-width="0.2">Preferencias del dibujo</text>
<circle cx="83.3" cy="84.8" r="3.3" stroke="#1f3f8f" stroke-width="1.6" fill="none" shape-rendering="auto"/>
<path d="M82.8 84.3L86.8 88.3" stroke="#f0b020" stroke-width="1.6" shape-rendering="auto"/>
<circle cx="87.1" cy="88.6" r="0.8" fill="#e05020" shape-rendering="auto"/>
<path d="M570 108 Q573 105.8 575.3 108 Q577 110.5 574.3 112.5" stroke="#f2ac50" stroke-width="2" fill="none" shape-rendering="auto" stroke-linecap="round"/>
<path d="M568.8 106.5l0.4 3.6l3-1.6z" fill="#f2ac50" shape-rendering="auto"/>
<path d="M569.2 81.2L576 88M576 81.2L569.2 88" stroke="#111" stroke-width="1" shape-rendering="auto"/>
<text x="540.8" y="87.8" font-size="9" fill="#222" font-weight="bold" textLength="4.6" lengthAdjust="spacingAndGlyphs">?</text>
<rect x="80" y="103" width="102" height="13" fill="#ffffff"/>
<rect x="80" y="103" width="102" height="1" fill="#646464"/>
<rect x="80" y="103" width="1" height="13" fill="#646464"/>
<rect x="81" y="104" width="101" height="1" fill="#b8b8b8"/>
<text x="82" y="112.5" font-size="8" fill="#8c8c8c" textLength="16.0" lengthAdjust="spacingAndGlyphs" stroke="#8c8c8c" stroke-width="0.1">Filtro</text>
<rect x="80" y="121" width="134" height="328" fill="#ffffff"/>
<rect x="80" y="121" width="134" height="1" fill="#6e6e6e"/>
<rect x="80" y="121" width="1" height="328" fill="#6e6e6e"/>
<text x="96.8" y="129.8" font-size="8.2" fill="#000000" textLength="37.0" lengthAdjust="spacingAndGlyphs" stroke="#000000" stroke-width="0.2">Dimensión</text>
<rect x="107.8" y="132.5" width="97" height="8.6" fill="#3399ff"/>
<text x="109.6" y="139.70000000000002" font-size="8.2" fill="#ffffff" textLength="88.4" lengthAdjust="spacingAndGlyphs" stroke="#ffffff" stroke-width="0.2">Configuración dimensión</text>
<text x="96.8" y="149.60000000000002" font-size="8.2" fill="#000000" textLength="23.2" lengthAdjust="spacingAndGlyphs" stroke="#000000" stroke-width="0.2">Diseño</text>
<text x="109.6" y="159.5" font-size="8.2" fill="#000000" textLength="31.4" lengthAdjust="spacingAndGlyphs" stroke="#000000" stroke-width="0.2">Viewports</text>
<text x="96.8" y="169.4" font-size="8.2" fill="#000000" textLength="25.0" lengthAdjust="spacingAndGlyphs" stroke="#000000" stroke-width="0.2">General</text>
<text x="109.6" y="179.3" font-size="8.2" fill="#000000" textLength="20.4" lengthAdjust="spacingAndGlyphs" stroke="#000000" stroke-width="0.2">Rejilla</text>
<text x="109.6" y="189.20000000000002" font-size="8.2" fill="#000000" textLength="43.9" lengthAdjust="spacingAndGlyphs" stroke="#000000" stroke-width="0.2">Tipo de línea</text>
<text x="109.6" y="199.10000000000002" font-size="8.2" fill="#000000" textLength="59.8" lengthAdjust="spacingAndGlyphs" stroke="#000000" stroke-width="0.2">Unidad de dibujo</text>
<text x="109.6" y="209.0" font-size="8.2" fill="#000000" textLength="93.3" lengthAdjust="spacingAndGlyphs" stroke="#000000" stroke-width="0.2">Visualización de los puntos</text>
<text x="96.8" y="218.90000000000003" font-size="8.2" fill="#000000" textLength="44.4" lengthAdjust="spacingAndGlyphs" stroke="#000000" stroke-width="0.2">Imprimiendo</text>
<text x="109.6" y="228.8" font-size="8.2" fill="#000000" textLength="25.9" lengthAdjust="spacingAndGlyphs" stroke="#000000" stroke-width="0.2">Colores</text>
<text x="109.6" y="238.70000000000002" font-size="8.2" fill="#000000" textLength="68.4" lengthAdjust="spacingAndGlyphs" stroke="#000000" stroke-width="0.2">Números de página</text>
<text x="109.6" y="248.60000000000002" font-size="8.2" fill="#000000" textLength="23.9" lengthAdjust="spacingAndGlyphs" stroke="#000000" stroke-width="0.2">Página</text>
<text x="109.6" y="258.5" font-size="8.2" fill="#000000" textLength="48.4" lengthAdjust="spacingAndGlyphs" stroke="#000000" stroke-width="0.2">Varias páginas</text>
<rect x="88" y="129" width="1" height="84" fill="#b8b8b8"/>
<rect x="101" y="131" width="1" height="6" fill="#b8b8b8"/>
<rect x="102" y="137" width="6" height="1" fill="#b8b8b8"/>
<rect x="85.5" y="123.9" width="6" height="6" fill="#fff" stroke="#a8a8a8" shape-rendering="auto"/>
<rect x="87" y="126" width="3" height="1" fill="#111"/>
<rect x="92" y="126" width="3" height="1" fill="#c8c8c8"/>
<rect x="101" y="151" width="1" height="6" fill="#b8b8b8"/>
<rect x="102" y="156" width="6" height="1" fill="#b8b8b8"/>
<rect x="85.5" y="143.7" width="6" height="6" fill="#fff" stroke="#a8a8a8" shape-rendering="auto"/>
<rect x="87" y="146" width="3" height="1" fill="#111"/>
<rect x="92" y="146" width="3" height="1" fill="#c8c8c8"/>
<rect x="101" y="170" width="1" height="36" fill="#b8b8b8"/>
<rect x="102" y="176" width="6" height="1" fill="#b8b8b8"/>
<rect x="102" y="186" width="6" height="1" fill="#b8b8b8"/>
<rect x="102" y="196" width="6" height="1" fill="#b8b8b8"/>
<rect x="102" y="206" width="6" height="1" fill="#b8b8b8"/>
<rect x="85.5" y="163.5" width="6" height="6" fill="#fff" stroke="#a8a8a8" shape-rendering="auto"/>
<rect x="87" y="166" width="3" height="1" fill="#111"/>
<rect x="92" y="166" width="3" height="1" fill="#c8c8c8"/>
<rect x="101" y="220" width="1" height="36" fill="#b8b8b8"/>
<rect x="102" y="226" width="6" height="1" fill="#b8b8b8"/>
<rect x="102" y="236" width="6" height="1" fill="#b8b8b8"/>
<rect x="102" y="246" width="6" height="1" fill="#b8b8b8"/>
<rect x="102" y="256" width="6" height="1" fill="#b8b8b8"/>
<rect x="85.5" y="213.0" width="6" height="6" fill="#fff" stroke="#a8a8a8" shape-rendering="auto"/>
<rect x="87" y="216" width="3" height="1" fill="#111"/>
<rect x="92" y="216" width="3" height="1" fill="#c8c8c8"/>
<rect x="187.5" y="106" width="8" height="8" fill="#fafafa" stroke="#5a5a5a" stroke-width="1" rx="1.6" shape-rendering="auto"/>
<rect x="203.8" y="106" width="8" height="8" fill="#fafafa" stroke="#5a5a5a" stroke-width="1" rx="1.6" shape-rendering="auto"/>
<path d="M188.5 110H195M191.5 107V113" stroke="#9a9a9a" stroke-width="1.2" shape-rendering="auto"/>
<path d="M205 110H211" stroke="#9a9a9a" stroke-width="1.8" shape-rendering="auto"/>
<text x="218.5" y="114.2" font-size="11.5" fill="#000" font-weight="bold" textLength="194.0" lengthAdjust="spacingAndGlyphs">Dimensión: Configuración dimensión</text>
<rect x="218" y="121" width="363" height="1" fill="#bababa"/>
<rect x="218" y="122" width="363" height="1" fill="#ffffff"/>
<rect x="218" y="127" width="361" height="1" fill="#6e6e6e"/>
<rect x="218" y="127" width="1" height="322" fill="#6e6e6e"/>
<svg x="219" y="128" width="349" height="321" overflow="hidden"><g transform="translate(-219,-128)">
<rect x="225" y="138" width="335" height="1" fill="#acacac"/>
<rect x="226" y="139" width="335" height="1" fill="#ffffff"/>
<rect x="225" y="138" width="1" height="156" fill="#acacac"/>
<rect x="226" y="139" width="1" height="156" fill="#ffffff"/>
<rect x="225" y="294" width="336" height="1" fill="#acacac"/>
<rect x="225" y="295" width="337" height="1" fill="#ffffff"/>
<rect x="560" y="138" width="1" height="157" fill="#acacac"/>
<rect x="561" y="138" width="1" height="158" fill="#ffffff"/>
<rect x="229" y="134" width="31.5" height="7" fill="#f0f0f0"/>
<text x="230" y="141.9" font-size="8.2" fill="#000" textLength="29.5" lengthAdjust="spacingAndGlyphs" stroke="#000" stroke-width="0.2">Tamaños</text>
<rect x="232" y="151" width="9" height="9" fill="#ffffff"/>
<rect x="232" y="151" width="9" height="1" fill="#5c5c5c"/>
<rect x="232" y="151" width="1" height="9" fill="#5c5c5c"/>
<text x="243.8" y="159" font-size="8.2" fill="#000" textLength="73.2" lengthAdjust="spacingAndGlyphs" stroke="#000" stroke-width="0.2">Mantener proporciones</text>
<text x="232.3" y="175.9" font-size="8.2" fill="#000" textLength="52.0" lengthAdjust="spacingAndGlyphs" stroke="#000" stroke-width="0.2">Altura del texto:</text>
<rect x="359" y="166" width="163" height="12" fill="#ffffff"/>
<rect x="359" y="166" width="163" height="1" fill="#646464"/>
<rect x="359" y="166" width="1" height="12" fill="#646464"/>
<rect x="359" y="178" width="164" height="1" fill="#fbfbfb"/>
<text x="361" y="175.6" font-size="8.2" fill="#000" textLength="11.0" lengthAdjust="spacingAndGlyphs" stroke="#000" stroke-width="0.2">3.5</text>
<text x="527" y="175.9" font-size="8.2" fill="#000" textLength="27.0" lengthAdjust="spacingAndGlyphs" stroke="#000" stroke-width="0.2">Milímetro</text>
<text x="232.3" y="193.1" font-size="8.2" fill="#000" textLength="94.5" lengthAdjust="spacingAndGlyphs" stroke="#000" stroke-width="0.2">Extensión línea de referencia:</text>
<rect x="359" y="183" width="163" height="12" fill="#ffffff"/>
<rect x="359" y="183" width="163" height="1" fill="#646464"/>
<rect x="359" y="183" width="1" height="12" fill="#646464"/>
<rect x="359" y="195" width="164" height="1" fill="#fbfbfb"/>
<text x="361" y="192.6" font-size="8.2" fill="#000" textLength="14.5" lengthAdjust="spacingAndGlyphs" stroke="#000" stroke-width="0.2">1.75</text>
<text x="527" y="193.1" font-size="8.2" fill="#000" textLength="27.0" lengthAdjust="spacingAndGlyphs" stroke="#000" stroke-width="0.2">Milímetro</text>
<text x="232.3" y="210.3" font-size="8.2" fill="#000" textLength="89.5" lengthAdjust="spacingAndGlyphs" stroke="#000" stroke-width="0.2">Desfase línea de referencia:</text>
<rect x="359" y="200" width="163" height="12" fill="#ffffff"/>
<rect x="359" y="200" width="163" height="1" fill="#646464"/>
<rect x="359" y="200" width="1" height="12" fill="#646464"/>
<rect x="359" y="212" width="164" height="1" fill="#fbfbfb"/>
<text x="361" y="209.6" font-size="8.2" fill="#000" textLength="18.6" lengthAdjust="spacingAndGlyphs" stroke="#000" stroke-width="0.2">0.875</text>
<text x="527" y="210.3" font-size="8.2" fill="#000" textLength="27.0" lengthAdjust="spacingAndGlyphs" stroke="#000" stroke-width="0.2">Milímetro</text>
<text x="232.3" y="227.5" font-size="8.2" fill="#000" textLength="85.6" lengthAdjust="spacingAndGlyphs" stroke="#000" stroke-width="0.2">Espacio línea de dimensión:</text>
<rect x="359" y="218" width="163" height="12" fill="#ffffff"/>
<rect x="359" y="218" width="163" height="1" fill="#646464"/>
<rect x="359" y="218" width="1" height="12" fill="#646464"/>
<rect x="359" y="230" width="164" height="1" fill="#fbfbfb"/>
<text x="361" y="227.6" font-size="8.2" fill="#000" textLength="18.6" lengthAdjust="spacingAndGlyphs" stroke="#000" stroke-width="0.2">0.875</text>
<text x="527" y="227.5" font-size="8.2" fill="#000" textLength="27.0" lengthAdjust="spacingAndGlyphs" stroke="#000" stroke-width="0.2">Milímetro</text>
<text x="232.3" y="244.7" font-size="8.2" fill="#000" textLength="48.4" lengthAdjust="spacingAndGlyphs" stroke="#000" stroke-width="0.2">Tamaño flecha:</text>
<rect x="359" y="235" width="163" height="12" fill="#ffffff"/>
<rect x="359" y="235" width="163" height="1" fill="#646464"/>
<rect x="359" y="235" width="1" height="12" fill="#646464"/>
<rect x="359" y="247" width="164" height="1" fill="#fbfbfb"/>
<text x="361" y="244.6" font-size="8.2" fill="#000" textLength="11.0" lengthAdjust="spacingAndGlyphs" stroke="#000" stroke-width="0.2">3.5</text>
<text x="527" y="244.7" font-size="8.2" fill="#000" textLength="27.0" lengthAdjust="spacingAndGlyphs" stroke="#000" stroke-width="0.2">Milímetro</text>
<text x="232.3" y="261.9" font-size="8.2" fill="#000" textLength="122.4" lengthAdjust="spacingAndGlyphs" stroke="#000" stroke-width="0.2">Incremento de las líneas de dimensión:</text>
<rect x="359" y="252" width="163" height="12" fill="#ffffff"/>
<rect x="359" y="252" width="163" height="1" fill="#646464"/>
<rect x="359" y="252" width="1" height="12" fill="#646464"/>
<rect x="359" y="264" width="164" height="1" fill="#fbfbfb"/>
<text x="361" y="261.6" font-size="8.2" fill="#000" textLength="14.5" lengthAdjust="spacingAndGlyphs" stroke="#000" stroke-width="0.2">0.38</text>
<text x="527" y="261.9" font-size="8.2" fill="#000" textLength="27.0" lengthAdjust="spacingAndGlyphs" stroke="#000" stroke-width="0.2">Milímetro</text>
<rect x="232" y="269" width="324" height="1" fill="#a0a0a0"/>
<rect x="232" y="270" width="324" height="1" fill="#ffffff"/>
<text x="232.3" y="285" font-size="8.2" fill="#000" textLength="54.0" lengthAdjust="spacingAndGlyphs" stroke="#000" stroke-width="0.2">Factor de escala:</text>
<rect x="291" y="276" width="132" height="12" fill="#ffffff"/>
<rect x="291" y="276" width="132" height="1" fill="#646464"/>
<rect x="291" y="276" width="1" height="12" fill="#646464"/>
<rect x="291" y="288" width="133" height="1" fill="#fbfbfb"/>
<text x="293" y="285.6" font-size="8.2" fill="#000" textLength="3.5" lengthAdjust="spacingAndGlyphs" stroke="#000" stroke-width="0.2">1</text>
<rect x="225" y="303" width="335" height="1" fill="#acacac"/>
<rect x="226" y="304" width="335" height="1" fill="#ffffff"/>
<rect x="225" y="303" width="1" height="26" fill="#acacac"/>
<rect x="226" y="304" width="1" height="26" fill="#ffffff"/>
<rect x="225" y="329" width="336" height="1" fill="#acacac"/>
<rect x="225" y="330" width="337" height="1" fill="#ffffff"/>
<rect x="560" y="303" width="1" height="27" fill="#acacac"/>
<rect x="561" y="303" width="1" height="28" fill="#ffffff"/>
<rect x="229" y="299" width="40" height="7" fill="#f0f0f0"/>
<text x="230" y="306.9" font-size="8.2" fill="#000" textLength="38.0" lengthAdjust="spacingAndGlyphs" stroke="#000" stroke-width="0.2">Estilo flecha</text>
<circle cx="236" cy="319" r="3.7" fill="#f8f8f8" stroke="#e0e0e0" stroke-width="1" shape-rendering="auto"/>
<path d="M233.4 321.6A3.7 3.7 0 0 1 238.6 316.4" fill="none" stroke="#707070" stroke-width="1.1" shape-rendering="auto"/>
<circle cx="236" cy="319" r="1.6" fill="#000" shape-rendering="auto"/>
<text x="243.8" y="322" font-size="8.2" fill="#000" textLength="20.2" lengthAdjust="spacingAndGlyphs" stroke="#000" stroke-width="0.2">Flecha</text>
<circle cx="275.6" cy="319" r="3.7" fill="#f8f8f8" stroke="#e0e0e0" stroke-width="1" shape-rendering="auto"/>
<path d="M273.0 321.6A3.7 3.7 0 0 1 278.20000000000005 316.4" fill="none" stroke="#707070" stroke-width="1.1" shape-rendering="auto"/>
<text x="283.4" y="322" font-size="8.2" fill="#000" textLength="66.6" lengthAdjust="spacingAndGlyphs" stroke="#000" stroke-width="0.2">Marca arquitectónica</text>
<rect x="225" y="338" width="335" height="1" fill="#acacac"/>
<rect x="226" y="339" width="335" height="1" fill="#ffffff"/>
<rect x="225" y="338" width="1" height="31" fill="#acacac"/>
<rect x="226" y="339" width="1" height="31" fill="#ffffff"/>
<rect x="225" y="369" width="336" height="1" fill="#acacac"/>
<rect x="225" y="370" width="337" height="1" fill="#ffffff"/>
<rect x="560" y="338" width="1" height="32" fill="#acacac"/>
<rect x="561" y="338" width="1" height="33" fill="#ffffff"/>
<rect x="229" y="334" width="25" height="7" fill="#f0f0f0"/>
<text x="230" y="341.9" font-size="8.2" fill="#000" textLength="23.0" lengthAdjust="spacingAndGlyphs" stroke="#000" stroke-width="0.2">Fuente</text>
<text x="232" y="360" font-size="8.2" fill="#000" textLength="24.9" lengthAdjust="spacingAndGlyphs" stroke="#000" stroke-width="0.2">Fuente:</text>
<rect x="396" y="350" width="158" height="12" fill="#ffffff"/>
<rect x="396" y="350" width="158" height="1" fill="#646464"/>
<rect x="396" y="350" width="1" height="12" fill="#646464"/>
<rect x="396" y="362" width="159" height="1" fill="#fbfbfb"/>
<text x="398" y="359.6" font-size="8.2" fill="#000" textLength="45.2" lengthAdjust="spacingAndGlyphs" stroke="#000" stroke-width="0.2">Helvetica-Bold</text>
<rect x="397" y="351" width="157" height="1" fill="#a8a8a8"/>
<rect x="397" y="351" width="1" height="11" fill="#a8a8a8"/>
<rect x="543" y="352" width="10" height="10" fill="#f0f0f0"/>
<rect x="543" y="352" width="10" height="1" fill="#ffffff"/>
<rect x="543" y="352" width="1" height="9" fill="#ffffff"/>
<rect x="543" y="361" width="11" height="1" fill="#555555"/>
<rect x="553" y="351" width="1" height="11" fill="#555555"/>
<path d="M545.2 354.9h5.6l-2.8 3.2z" fill="#000" shape-rendering="auto"/>
<rect x="225" y="379" width="335" height="1" fill="#acacac"/>
<rect x="226" y="380" width="335" height="1" fill="#ffffff"/>
<rect x="225" y="379" width="1" height="30" fill="#acacac"/>
<rect x="226" y="380" width="1" height="30" fill="#ffffff"/>
<rect x="225" y="409" width="336" height="1" fill="#acacac"/>
<rect x="225" y="410" width="337" height="1" fill="#ffffff"/>
<rect x="560" y="379" width="1" height="31" fill="#acacac"/>
<rect x="561" y="379" width="1" height="32" fill="#ffffff"/>
<rect x="229.4" y="375" width="59.6" height="7" fill="#f0f0f0"/>
<text x="230.4" y="382.9" font-size="8.2" fill="#000" textLength="57.6" lengthAdjust="spacingAndGlyphs" stroke="#000" stroke-width="0.2">Formato numérico</text>
<text x="232" y="401" font-size="8.2" fill="#000" textLength="60.6" lengthAdjust="spacingAndGlyphs" stroke="#000" stroke-width="0.2">Separador decimal:</text>
<rect x="297" y="391" width="49" height="12" fill="#ffffff"/>
<rect x="297" y="391" width="49" height="1" fill="#646464"/>
<rect x="297" y="391" width="1" height="12" fill="#646464"/>
<rect x="297" y="403" width="50" height="1" fill="#fbfbfb"/>
<text x="299" y="400.6" font-size="8.2" fill="#000" textLength="28.0" lengthAdjust="spacingAndGlyphs" stroke="#000" stroke-width="0.2">. (Punto)</text>
<rect x="298" y="392" width="48" height="1" fill="#a8a8a8"/>
<rect x="298" y="392" width="1" height="11" fill="#a8a8a8"/>
<rect x="335" y="393" width="10" height="10" fill="#f0f0f0"/>
<rect x="335" y="393" width="10" height="1" fill="#ffffff"/>
<rect x="335" y="393" width="1" height="9" fill="#ffffff"/>
<rect x="335" y="402" width="11" height="1" fill="#555555"/>
<rect x="345" y="392" width="1" height="11" fill="#555555"/>
<path d="M337.2 395.9h5.6l-2.8 3.2z" fill="#000" shape-rendering="auto"/>
<rect x="225" y="419" width="335" height="1" fill="#acacac"/>
<rect x="226" y="420" width="335" height="1" fill="#ffffff"/>
<rect x="225" y="419" width="1" height="50" fill="#acacac"/>
<rect x="226" y="420" width="1" height="50" fill="#ffffff"/>
<rect x="225" y="469" width="336" height="1" fill="#acacac"/>
<rect x="225" y="470" width="337" height="1" fill="#ffffff"/>
<rect x="560" y="419" width="1" height="51" fill="#acacac"/>
<rect x="561" y="419" width="1" height="52" fill="#ffffff"/>
<rect x="229" y="415" width="68" height="7" fill="#f0f0f0"/>
<text x="230" y="422.9" font-size="8.2" fill="#000" textLength="66.0" lengthAdjust="spacingAndGlyphs" stroke="#000" stroke-width="0.2">Formato de etiqueta</text>
<rect x="233" y="435" width="157" height="1" fill="#acacac"/>
<rect x="234" y="436" width="157" height="1" fill="#ffffff"/>
<rect x="233" y="435" width="1" height="34" fill="#acacac"/>
<rect x="234" y="436" width="1" height="34" fill="#ffffff"/>
<rect x="233" y="469" width="158" height="1" fill="#acacac"/>
<rect x="233" y="470" width="159" height="1" fill="#ffffff"/>
<rect x="390" y="435" width="1" height="35" fill="#acacac"/>
<rect x="391" y="435" width="1" height="36" fill="#ffffff"/>
<rect x="236.3" y="431" width="52.7" height="7" fill="#f0f0f0"/>
<text x="237.3" y="438.9" font-size="8.2" fill="#000" textLength="50.7" lengthAdjust="spacingAndGlyphs" stroke="#000" stroke-width="0.2">Dimensión lineal</text>
<rect x="315" y="447" width="68" height="13" fill="#ffffff"/>
<rect x="315" y="447" width="68" height="1" fill="#646464"/>
<rect x="315" y="447" width="1" height="13" fill="#646464"/>
<rect x="315" y="460" width="69" height="1" fill="#fbfbfb"/>
<rect x="395" y="435" width="158" height="1" fill="#acacac"/>
<rect x="396" y="436" width="158" height="1" fill="#ffffff"/>
<rect x="395" y="435" width="1" height="34" fill="#acacac"/>
<rect x="396" y="436" width="1" height="34" fill="#ffffff"/>
<rect x="395" y="469" width="159" height="1" fill="#acacac"/>
<rect x="395" y="470" width="160" height="1" fill="#ffffff"/>
<rect x="553" y="435" width="1" height="35" fill="#acacac"/>
<rect x="554" y="435" width="1" height="36" fill="#ffffff"/>
<rect x="399.6" y="431" width="59.4" height="7" fill="#f0f0f0"/>
<text x="400.6" y="438.9" font-size="8.2" fill="#000" textLength="57.4" lengthAdjust="spacingAndGlyphs" stroke="#000" stroke-width="0.2">Dimensión angular</text>
<rect x="458" y="447" width="89" height="13" fill="#ffffff"/>
<rect x="458" y="447" width="89" height="1" fill="#646464"/>
<rect x="458" y="447" width="1" height="13" fill="#646464"/>
<rect x="458" y="460" width="90" height="1" fill="#fbfbfb"/>
</g></svg>
<rect x="568" y="128" width="10" height="321" fill="#f7f7f7"/>
<rect x="568" y="128" width="10" height="11" fill="#f0f0f0"/>
<rect x="568" y="128" width="10" height="1" fill="#ffffff"/>
<rect x="568" y="128" width="1" height="11" fill="#ffffff"/>
<rect x="568" y="138" width="10" height="1" fill="#6a6a6a"/>
<rect x="577" y="128" width="1" height="11" fill="#6a6a6a"/>
<path d="M570.5 136h5l-2.5-3z" fill="#000" shape-rendering="auto"/>
<rect x="568" y="139" width="10" height="230" fill="#f0f0f0"/>
<rect x="568" y="139" width="10" height="1" fill="#ffffff"/>
<rect x="568" y="139" width="1" height="230" fill="#ffffff"/>
<rect x="568" y="368" width="10" height="1" fill="#6a6a6a"/>
<rect x="577" y="139" width="1" height="230" fill="#6a6a6a"/>
<rect x="568" y="438" width="10" height="11" fill="#f0f0f0"/>
<rect x="568" y="438" width="10" height="1" fill="#ffffff"/>
<rect x="568" y="438" width="1" height="11" fill="#ffffff"/>
<rect x="568" y="448" width="10" height="1" fill="#6a6a6a"/>
<rect x="577" y="438" width="1" height="11" fill="#6a6a6a"/>
<path d="M570.5 442h5l-2.5 3z" fill="#000" shape-rendering="auto"/>
<rect x="578" y="127" width="1" height="1" fill="#6e6e6e"/>
<rect x="420" y="455" width="50" height="15" fill="#f0f0f0"/>
<rect x="420" y="455" width="50" height="1" fill="#ffffff"/>
<rect x="420" y="455" width="1" height="15" fill="#ffffff"/>
<rect x="420" y="469" width="50" height="1" fill="#4a4a4a"/>
<rect x="469" y="455" width="1" height="15" fill="#4a4a4a"/>
<rect x="421" y="468" width="48" height="1" fill="#a8a8a8"/>
<rect x="468" y="456" width="1" height="13" fill="#a8a8a8"/>
<text x="432.3" y="465.8" font-size="8.2" fill="#000" textLength="24.2" lengthAdjust="spacingAndGlyphs">Aceptar</text>
<rect x="475" y="455" width="50" height="15" fill="#f0f0f0"/>
<rect x="475" y="455" width="50" height="1" fill="#ffffff"/>
<rect x="475" y="455" width="1" height="15" fill="#ffffff"/>
<rect x="475" y="469" width="50" height="1" fill="#4a4a4a"/>
<rect x="524" y="455" width="1" height="15" fill="#4a4a4a"/>
<rect x="476" y="468" width="48" height="1" fill="#a8a8a8"/>
<rect x="523" y="456" width="1" height="13" fill="#a8a8a8"/>
<text x="485.6" y="465.8" font-size="8.2" fill="#000" textLength="27.4" lengthAdjust="spacingAndGlyphs">Cancelar</text>
<rect x="530" y="455" width="50" height="15" fill="#f0f0f0"/>
<rect x="530" y="455" width="50" height="1" fill="#ffffff"/>
<rect x="530" y="455" width="1" height="15" fill="#ffffff"/>
<rect x="530" y="469" width="50" height="1" fill="#4a4a4a"/>
<rect x="579" y="455" width="1" height="15" fill="#4a4a4a"/>
<rect x="531" y="468" width="48" height="1" fill="#a8a8a8"/>
<rect x="578" y="456" width="1" height="13" fill="#a8a8a8"/>
<text x="544.2" y="465.8" font-size="8.2" fill="#000" textLength="20.1" lengthAdjust="spacingAndGlyphs">Aplicar</text>
<defs><radialGradient id="bg" cx="0.5" cy="0.35" r="0.65"><stop offset="0" stop-color="#ff3a10"/><stop offset="0.7" stop-color="#ee3a12"/><stop offset="1" stop-color="#f2a070"/></radialGradient></defs>
<circle cx="46" cy="8.7" r="7.2" fill="url(#bg)" stroke="#f7b9a0" stroke-width="0.6" shape-rendering="auto"/>
<text x="42.4" y="13.399999999999999" font-size="13.5" font-weight="bold" fill="#fff" stroke="#111" stroke-width="2.3" paint-order="stroke" textLength="7.2" lengthAdjust="spacingAndGlyphs">1</text>
<circle cx="180.8" cy="85.1" r="7.6" fill="url(#bg)" stroke="#f7b9a0" stroke-width="0.6" shape-rendering="auto"/>
<text x="177.20000000000002" y="89.8" font-size="13.5" font-weight="bold" fill="#fff" stroke="#111" stroke-width="2.3" paint-order="stroke" textLength="7.2" lengthAdjust="spacingAndGlyphs">2</text>
<circle cx="210.3" cy="136.4" r="7.2" fill="url(#bg)" stroke="#f7b9a0" stroke-width="0.6" shape-rendering="auto"/>
<text x="206.70000000000002" y="141.1" font-size="13.5" font-weight="bold" fill="#fff" stroke="#111" stroke-width="2.3" paint-order="stroke" textLength="7.2" lengthAdjust="spacingAndGlyphs">3</text>

</svg></body></html>
